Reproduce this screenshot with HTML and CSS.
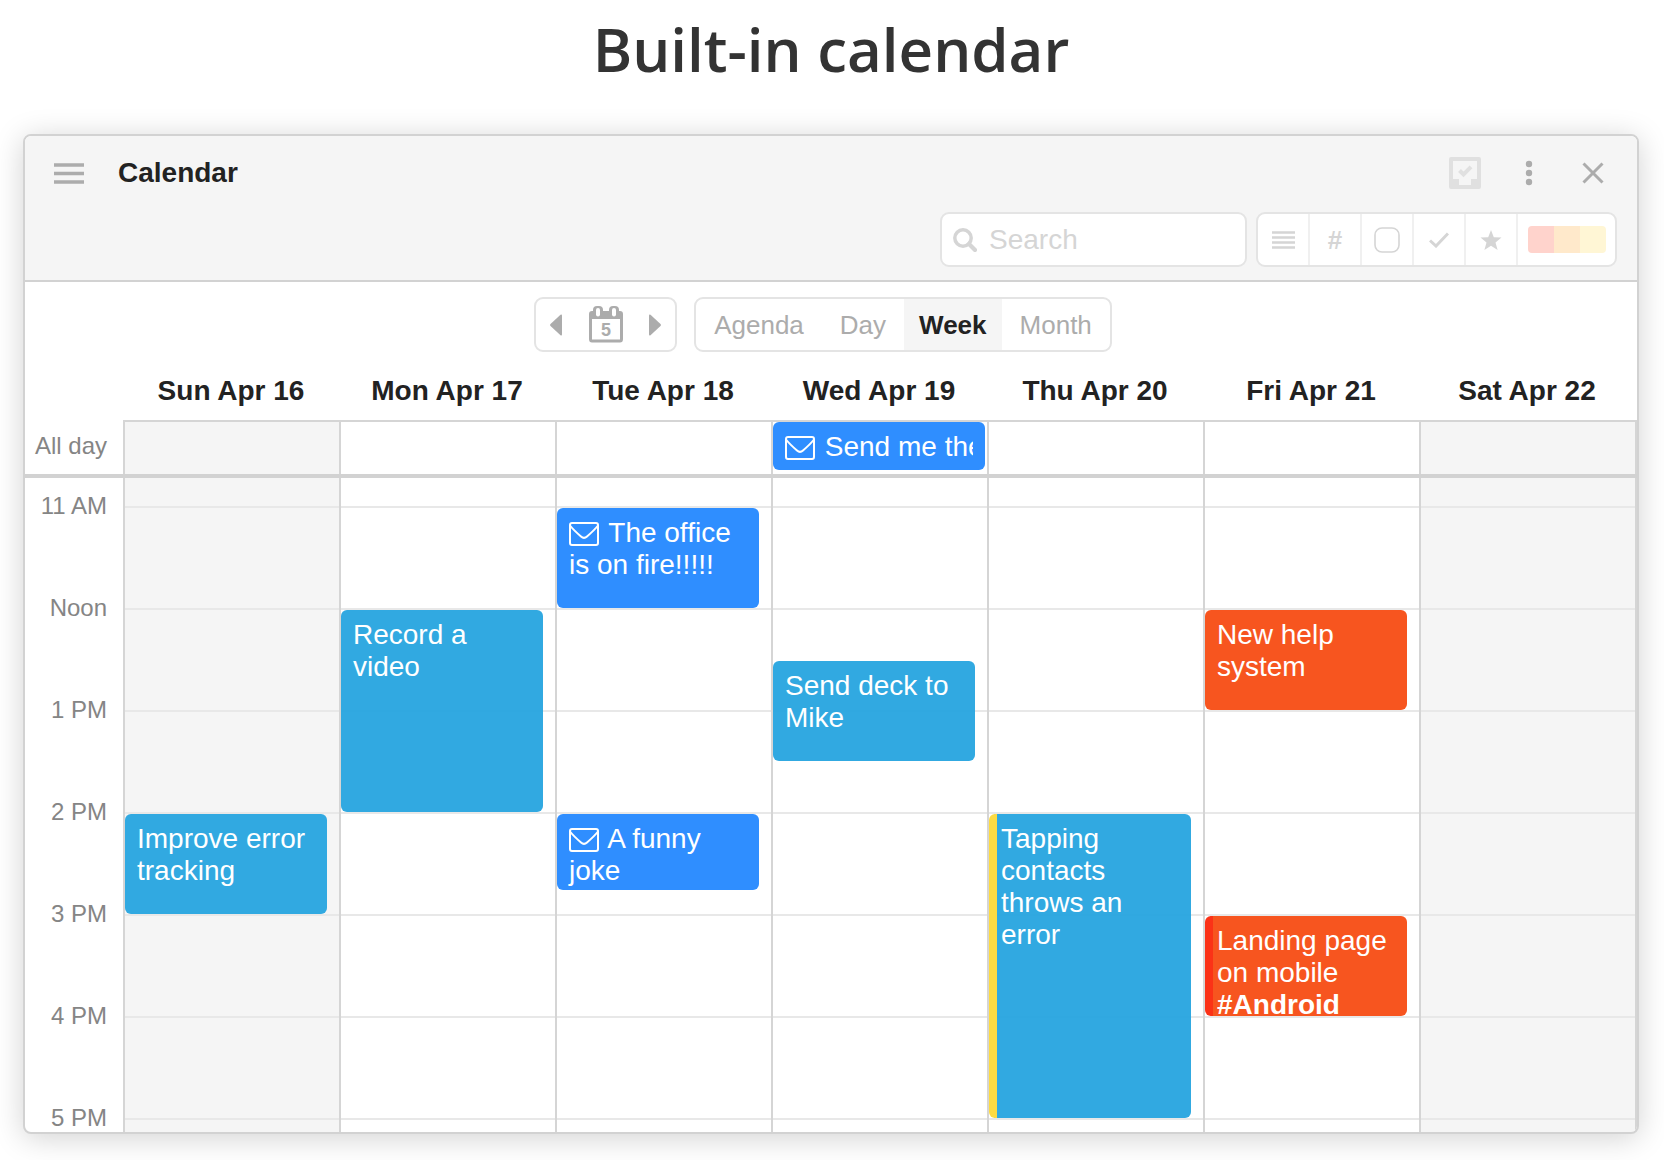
FILE: index.html
```html
<!DOCTYPE html>
<html lang="en">
<head>
<meta charset="utf-8">
<meta name="viewport" content="width=device-width, initial-scale=1">
<title>Built-in calendar</title>
<link rel="stylesheet" href="styles.css">
</head>
<body>
<svg class="sprite" aria-hidden="true">
  <symbol id="mail" viewBox="0 0 30 24">
    <rect x="1" y="1" width="28" height="22" rx="2" fill="none" stroke="currentColor" stroke-width="2"/>
    <path d="M1 3.5C4 7.500 8 11 12 14.500C14 16.400 16 16.400 18 14.500C22 11 26 7.500 29 3.500" fill="none" stroke="currentColor" stroke-width="2"/>
  </symbol>
</svg>
<h1 class="headline">Built-in calendar</h1>
<main class="panel">
  <header class="header">
    <div class="header-top">
      <button class="icon-button menu-button" aria-label="Menu">
        <svg width="30" height="21" viewBox="0 0 30 21"><path d="M0 2H30M0 10.500H30M0 19H30" stroke="currentColor" stroke-width="3.400"/></svg>
      </button>
      <h2 class="title">Calendar</h2>
      <button class="icon-button faded" aria-label="Inbox">
        <svg width="32" height="32" viewBox="0 0 32 32"><path fill="currentColor" fill-rule="evenodd" d="M2 0H30Q32 0 32 2V30Q32 32 30 32H2Q0 32 0 30V2Q0 0 2 0ZM4 4V22H10V28H22V22H28V4Z"/><path d="M10.500 13.500L14.500 17.500L22 9.800" fill="none" stroke="currentColor" stroke-width="4"/></svg>
      </button>
      <button class="icon-button" aria-label="More">
        <svg width="8" height="26" viewBox="0 0 8 26"><g fill="currentColor"><circle cx="4" cy="4" r="3.200"/><circle cx="4" cy="13" r="3.200"/><circle cx="4" cy="22" r="3.200"/></g></svg>
      </button>
      <button class="icon-button" aria-label="Close">
        <svg width="22" height="22" viewBox="0 0 22 22"><path d="M1.500 1.500L20.500 20.500M20.500 1.500L1.500 20.500" stroke="currentColor" stroke-width="3"/></svg>
      </button>
    </div>
    <div class="header-tools">
      <label class="search">
        <svg width="24" height="24" viewBox="0 0 24 24"><circle cx="10" cy="10" r="8.200" fill="none" stroke="currentColor" stroke-width="3.500"/><path d="M16 16L22 22" stroke="currentColor" stroke-width="4.200" stroke-linecap="round"/></svg>
        <input class="search-input" type="text" placeholder="Search" aria-label="Search">
      </label>
      <div class="filters">
        <button class="filter" aria-label="Notes"><svg width="23" height="18" viewBox="0 0 23 18"><path d="M0 1.500H23M0 6.500H23M0 11.500H23M0 16.500H23" stroke="currentColor" stroke-width="2.400"/></svg></button>
        <button class="filter" aria-label="Tags">#</button>
        <button class="filter" aria-label="Tasks"><svg width="26" height="26" viewBox="0 0 26 26"><rect x="1" y="1" width="24" height="24" rx="7" fill="none" stroke="currentColor" stroke-width="1.600"/></svg></button>
        <button class="filter" aria-label="Completed"><svg width="20" height="16" viewBox="0 0 20 16"><path d="M1 8.500L7 14L19 1.500" fill="none" stroke="currentColor" stroke-width="3"/></svg></button>
        <button class="filter" aria-label="Starred"><svg width="22" height="20" viewBox="0 0 22 20"><path fill="currentColor" d="M11 0L13.800 7.200L21.500 7.600L15.500 12.400L17.600 20L11 15.700L4.400 20L6.500 12.400L.5 7.600L8.200 7.200Z"/></svg></button>
        <button class="filter filter-colors" aria-label="Colors"><span class="swatch red"></span><span class="swatch orange"></span><span class="swatch yellow"></span></button>
      </div>
    </div>
  </header>

  <div class="view-bar">
    <div class="stepper">
      <button class="step" aria-label="Previous week"><svg width="12" height="22" viewBox="0 0 12 22"><path fill="currentColor" d="M10.500 .8Q12 0 12 1.800V20.200Q12 22 10.500 21.200L.5 12Q-.4 11 .5 10Z"/></svg></button>
      <button class="step step-today" aria-label="Today"><svg width="34" height="37" viewBox="0 0 34 37"><path fill="currentColor" fill-rule="evenodd" d="M3 5H31Q34 5 34 8V33Q34 36.500 31 36.500H3Q0 36.500 0 33V8Q0 5 3 5ZM3 13V33.500H31V13Z"/><rect x="4" y="0" width="10" height="11" rx="4" fill="currentColor"/><rect x="20" y="0" width="10" height="11" rx="4" fill="currentColor"/><rect x="7" y="2" width="4" height="8.500" rx="2" fill="#fff"/><rect x="23" y="2" width="4" height="8.500" rx="2" fill="#fff"/><text class="today-number" x="17" y="29.500" text-anchor="middle">5</text></svg></button>
      <button class="step" aria-label="Next week"><svg width="12" height="22" viewBox="0 0 12 22"><path fill="currentColor" d="M1.500 .8Q0 0 0 1.800V20.200Q0 22 1.500 21.200L11.500 12Q12.400 11 11.500 10Z"/></svg></button>
    </div>
    <div class="views">
      <button class="view">Agenda</button>
      <button class="view">Day</button>
      <button class="view active" aria-pressed="true">Week</button>
      <button class="view">Month</button>
    </div>
  </div>

  <section class="week">
    <div class="week-row day-names">
      <span></span>
      <h3 class="day-name">Sun Apr 16</h3>
      <h3 class="day-name">Mon Apr 17</h3>
      <h3 class="day-name">Tue Apr 18</h3>
      <h3 class="day-name">Wed Apr 19</h3>
      <h3 class="day-name">Thu Apr 20</h3>
      <h3 class="day-name">Fri Apr 21</h3>
      <h3 class="day-name">Sat Apr 22</h3>
    </div>

    <div class="week-row all-day">
      <span class="all-day-label">All day</span>
      <div class="all-day-cell weekend"></div>
      <div class="all-day-cell"></div>
      <div class="all-day-cell"></div>
      <div class="all-day-cell">
        <article class="event mail all-day-event"><p class="event-line"><svg class="mail-icon" width="30" height="24"><use href="#mail"/></svg> Send me the</p></article>
      </div>
      <div class="all-day-cell"></div>
      <div class="all-day-cell"></div>
      <div class="all-day-cell weekend"></div>
    </div>

    <div class="week-row hours">
      <ol class="hour-labels">
        <li class="hour">11 AM</li>
        <li class="hour">Noon</li>
        <li class="hour">1 PM</li>
        <li class="hour">2 PM</li>
        <li class="hour">3 PM</li>
        <li class="hour">4 PM</li>
        <li class="hour">5 PM</li>
      </ol>
      <div class="day weekend">
        <article class="event task from-2pm hour-long">Improve error tracking</article>
      </div>
      <div class="day">
        <article class="event task from-noon two-hours">Record a video</article>
      </div>
      <div class="day">
        <article class="event mail from-11am hour-long"><svg class="mail-icon" width="30" height="24"><use href="#mail"/></svg> The office is on fire!!!!!</article>
        <article class="event mail from-2pm hour-long three-quarters"><svg class="mail-icon" width="30" height="24"><use href="#mail"/></svg> A funny joke</article>
      </div>
      <div class="day">
        <article class="event task from-half-past-noon hour-long">Send deck to Mike</article>
      </div>
      <div class="day">
        <article class="event task from-2pm three-hours marked marked-yellow">Tapping contacts throws an error</article>
      </div>
      <div class="day">
        <article class="event project from-noon hour-long">New help system</article>
        <article class="event project from-3pm hour-long marked marked-red">Landing page on mobile <strong>#Android</strong></article>
      </div>
      <div class="day weekend"></div>
    </div>
  </section>
</main>
</body>
</html>
```
FILE: styles.css
```css
* {
  box-sizing: border-box;
}

body {
  margin: 0;
  padding: 8px 25px 26px 23px;
  background: #fff;
  color: #222;
  font: 28px/32px "Liberation Sans", Arial, sans-serif;
}

h1, h2, h3, p, ol {
  margin: 0;
  padding: 0;
}

button, input {
  margin: 0;
  padding: 0;
  border: 0;
  background: none;
  color: inherit;
  font: inherit;
}

svg {
  display: block;
  flex: none;
}

.sprite {
  position: absolute;
  width: 0;
  height: 0;
}

.headline {
  margin-bottom: 44px;
  color: #333;
  font: 600 60px/82px "Open Sans", sans-serif;
  text-align: center;
}

.panel {
  overflow: hidden;
  border: 2px solid #d2d2d2;
  border-radius: 8px;
  background: #fff;
  box-shadow: 0 4px 30px rgba(0, 0, 0, 0.18);
}

/* Header */

.header {
  padding-bottom: 13px;
  border-bottom: 2px solid #d2d2d2;
  background: #f5f5f5;
}

.header-top {
  display: flex;
  align-items: center;
  height: 74px;
  margin-bottom: 2px;
  padding: 0 12px;
}

.icon-button {
  display: grid;
  place-items: center;
  width: 64px;
  height: 64px;
  color: #acacac;
}

.icon-button.faded {
  color: #e0e0e0;
}

.title {
  flex: 1;
  padding-left: 17px;
  font-size: 28px;
  font-weight: 700;
}

.header-tools {
  display: flex;
  justify-content: flex-end;
  gap: 9px;
  padding-right: 20px;
}

.search,
.filters,
.stepper,
.views {
  display: flex;
  height: 55px;
  border: 2px solid #e4e4e4;
  border-radius: 9px;
  background: #fff;
  overflow: hidden;
}

.search {
  align-items: center;
  gap: 12px;
  width: 307px;
  padding: 0 11px;
  color: #d5d5d5;
}

.search-input {
  flex: 1;
  min-width: 0;
  outline: 0;
}

.search-input::placeholder {
  color: #d5d5d5;
  opacity: 1;
}

.filter {
  display: grid;
  place-items: center;
  width: 52px;
  border-right: 2px solid #f0f0f0;
  color: #d5d5d5;
  font-size: 26px;
  font-weight: 700;
}

.filter-colors {
  display: flex;
  align-items: center;
  justify-content: center;
  width: 97px;
  border-right: 0;
}

.swatch {
  width: 26px;
  height: 27px;
}

.swatch.red {
  border-radius: 4px 0 0 4px;
  background: #ffd3cc;
}

.swatch.orange {
  background: #ffe9cb;
}

.swatch.yellow {
  border-radius: 0 4px 4px 0;
  background: #fff6d5;
}

/* View switcher */

.view-bar {
  display: flex;
  justify-content: center;
  gap: 17px;
  padding: 15px 16px 0 0;
  color: #acacac;
}

.step {
  display: grid;
  place-items: center;
  width: 40px;
}

.step-today {
  width: 59px;
}

.today-number {
  fill: currentColor;
  font-size: 18px;
  font-weight: 700;
}

.view {
  padding: 0 18px;
  font-size: 26px;
}

.view.active {
  padding: 0 15px;
  background: #f5f5f5;
  color: #222;
  font-weight: 700;
}

/* Week grid */

.week-row {
  display: grid;
  grid-template-columns: 98px repeat(7, minmax(0, 1fr));
  padding-right: 2px;
}

.day-names {
  padding-top: 23px;
  padding-bottom: 13px;
}

.day-name {
  font-size: 28px;
  font-weight: 700;
  text-align: center;
}

.all-day {
  border-bottom: 4px solid #d2d2d2;
}

.all-day-label {
  padding: 12px 16px 0 0;
  color: #858585;
  font-size: 24px;
  line-height: 28px;
  text-align: right;
}

.all-day-cell {
  height: 54px;
  border-top: 2px solid #d5d5d5;
  border-left: 2px solid #d5d5d5;
}

.all-day-cell:last-child,
.day:last-child {
  box-shadow: 2px 0 0 #d5d5d5;
}

.hour-labels {
  padding: 14px 16px 0 0;
  list-style: none;
}

.hour {
  height: 102px;
  color: #858585;
  font-size: 24px;
  line-height: 28px;
  text-align: right;
}

.hour:last-child {
  height: 28px;
}

.day {
  display: grid;
  grid-template-rows: repeat(12, 51px);
  padding: 28px 12px 14px 0;
  border-left: 2px solid #d5d5d5;
  background-image: linear-gradient(#e8e8e8 2px, transparent 2px);
  background-position: 0 28px;
  background-size: 100% 102px;
}

.weekend {
  background-color: #f5f5f5;
}

/* Events */

.event {
  grid-column: 1;
  overflow: hidden;
  margin-top: 2px;
  padding: 9px 12px 0;
  border-radius: 6px;
  color: #fff;
}

.event.task {
  background: rgba(41, 165, 224, 0.96);
}

.event.mail {
  background: rgba(38, 137, 255, 0.96);
}

.event.project {
  background: rgba(247, 78, 22, 0.96);
}

.event.marked {
  padding-left: 4px;
  border-left: 8px solid;
}

.event.marked-yellow {
  border-left-color: #fddb43;
}

.event.marked-red {
  border-left-color: #fb3217;
}

.all-day-event {
  height: 48px;
  margin: 0 2px 0 0;
}

.event-line {
  overflow: hidden;
  white-space: nowrap;
}

.mail-icon {
  display: inline-block;
  margin-right: 2px;
  vertical-align: -4px;
}

.from-11am { grid-row-start: 1; }
.from-noon { grid-row-start: 3; }
.from-half-past-noon { grid-row-start: 4; }
.from-2pm { grid-row-start: 7; }
.from-3pm { grid-row-start: 9; }

.hour-long { grid-row-end: span 2; }
.two-hours { grid-row-end: span 4; }
.three-hours { grid-row-end: span 6; }

.three-quarters {
  height: 76px;
}
```
